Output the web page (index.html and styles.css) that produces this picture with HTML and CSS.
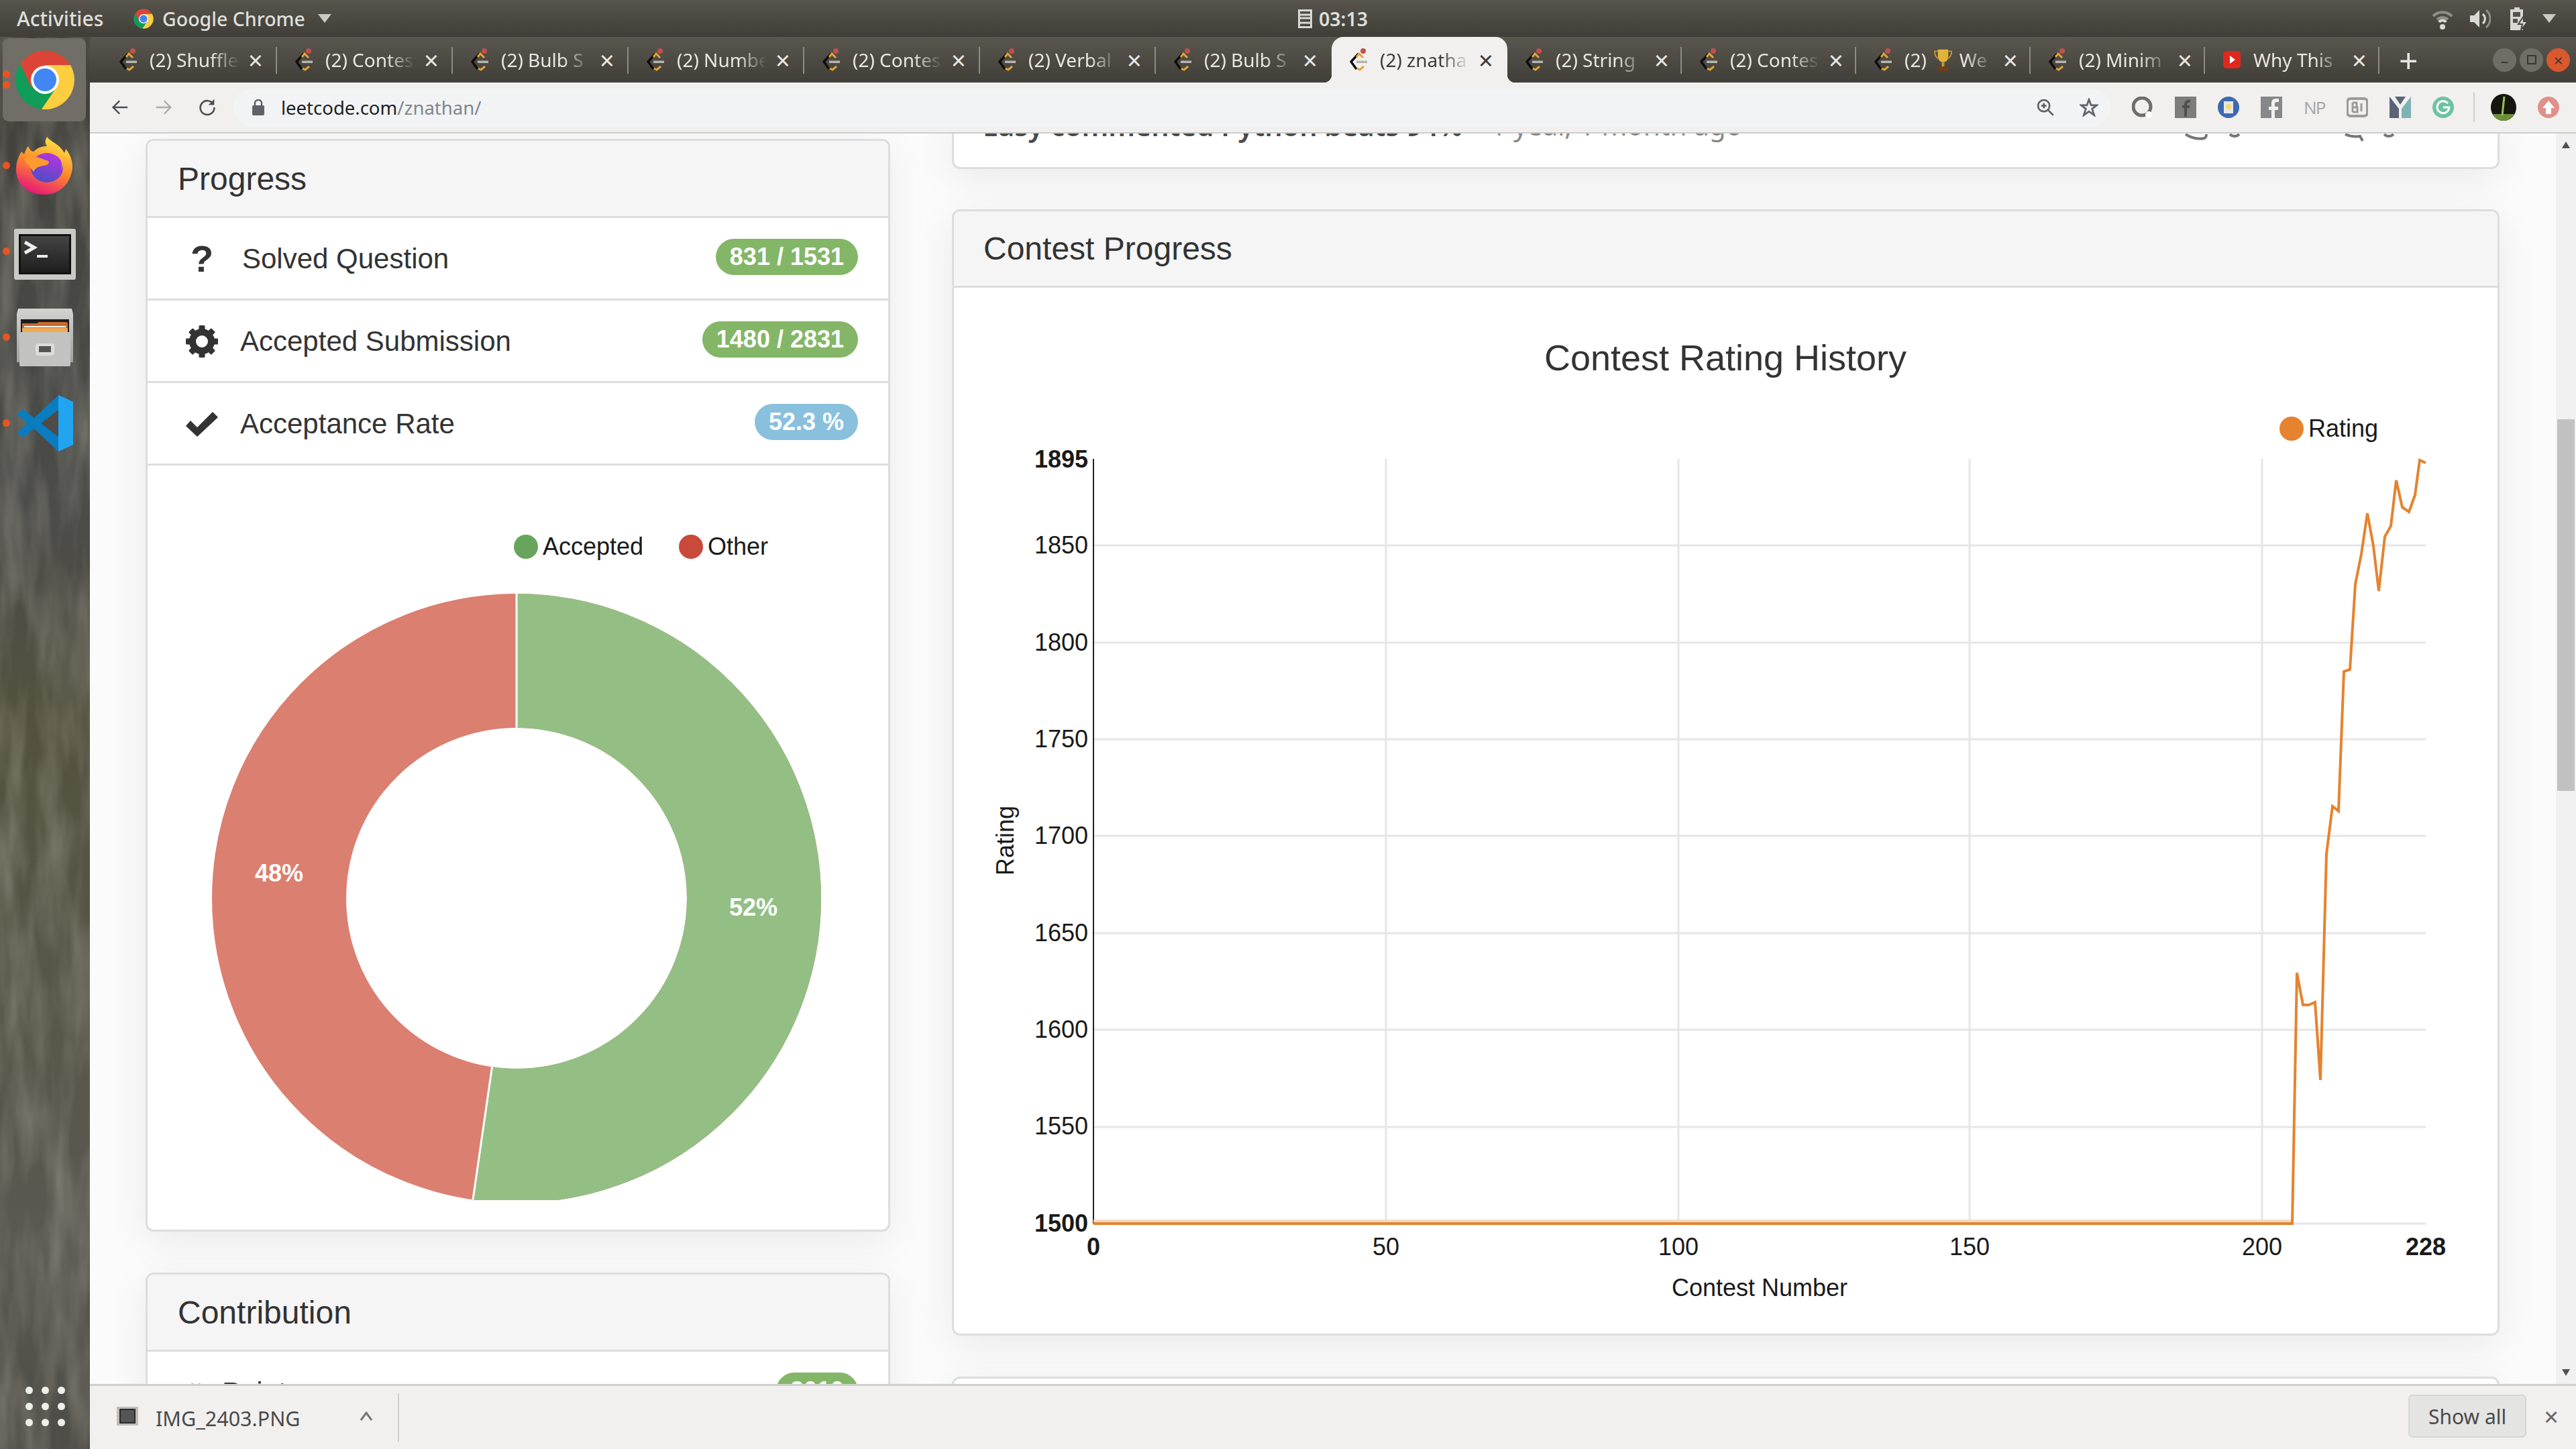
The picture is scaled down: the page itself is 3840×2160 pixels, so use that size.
FILE: index.html
```html
<!DOCTYPE html>
<html lang="en">
<head>
    <meta charset="UTF-8">
    <title>znathan - LeetCode Profile</title>
    <link rel="stylesheet" href="styles.css">
</head>
<body>
    <!-- shared icons -->
    <svg class="defs" width="0" height="0">
        <symbol id="chrome" viewBox="0 0 48 48">
            <circle cx="24" cy="24" r="22" fill="#0f9d58"/>
            <path d="M24 13H43A22 22 0 0 1 21.5 45.9L33 29Z" fill="#ffcd40"/>
            <path d="M5.6 12A22 22 0 0 1 43 13H24L14 30Z" fill="#db4437"/>
            <circle cx="24" cy="24" r="10.5" fill="#fff"/>
            <circle cx="24" cy="24" r="8.5" fill="#4285f4"/>
        </symbol>
        <symbol id="lc" viewBox="0 0 26 34">
            <path d="M13 8L2 20L10 31" fill="none" stroke="#0d0d0d" stroke-width="3.4" stroke-linejoin="round"/>
            <path d="M10 13L14 8L20 14M11 30L15 32L21 27" fill="none" stroke="#e5a235" stroke-width="3"/>
            <rect x="10" y="18.5" width="16" height="3.5" fill="#b5b5b0"/>
            <circle cx="20" cy="4" r="4" fill="#c0504d"/>
        </symbol>
        <filter id="wall" x="0" y="0" width="100%" height="100%">
            <feTurbulence type="fractalNoise" baseFrequency="0.03 0.006" numOctaves="3" seed="7"/>
            <feColorMatrix values="0 0 0 0 0.38  0 0 0 0 0.37  0 0 0 0 0.31  0.9 0 0 0 -0.32"/>
        </filter>
    </svg>

    <header class="topbar">
        <span class="activities">Activities</span>
        <svg class="top-chrome"><use href="#chrome"/></svg>
        <span class="app-name">Google Chrome</span>
        <span class="caret"></span>
        <span class="clock">
            <svg width="21" height="28" viewBox="0 0 21 28"><path d="M1.5 1.5h18v25h-18zM1.5 13h18M1.5 8h18M1.5 20h18" fill="none" stroke="#d8d8d4" stroke-width="3"/></svg>
            03:13
        </span>
        <span class="tray">
            <svg width="34" height="34" viewBox="0 0 34 34"><path d="M3 13A20 20 0 0 1 31 13M9 18A12 12 0 0 1 25 18" fill="none" stroke="#8f8e88" stroke-width="4"/><path d="M12 22A6 6 0 0 1 22 22" fill="none" stroke="#d8d8d4" stroke-width="4"/><circle cx="17" cy="29" r="4" fill="#d8d8d4"/></svg>
            <svg width="32" height="32" viewBox="0 0 32 32"><path d="M1 11h6L15 3v26L7 21H1z" fill="#d8d8d4"/><path d="M20 9a9 9 0 0 1 0 14" fill="none" stroke="#d8d8d4" stroke-width="3"/><path d="M25 3a17 17 0 0 1 0 26" fill="none" stroke="#8f8e88" stroke-width="3"/></svg>
            <svg class="battery" width="30" height="36" viewBox="0 0 30 36"><path d="M8 1h8v3h5v31H2V4h6z" fill="#d8d8d4"/><path d="M6 8h11v7H6zM6 18h7v6H6z" fill="#55524a"/><path d="M22 14l-8 12h6l-2 9 10-13h-6z" fill="#d8d8d4" stroke="#47453f" stroke-width="2"/></svg>
            <span class="caret"></span>
        </span>
    </header>

    <div class="desktop">
        <nav class="dock">
            <svg class="dock-wall" width="134" height="2105"><rect width="134" height="2105" filter="url(#wall)"/></svg>
            <div class="dock-item dock-active">
                <i class="run-dot run-dot-a"></i><i class="run-dot run-dot-b"></i>
                <svg width="96" height="96"><use href="#chrome"/></svg>
            </div>
            <div class="dock-item">
                <i class="run-dot"></i>
                <svg width="86" height="86" viewBox="0 0 86 86">
                    <defs>
                        <linearGradient id="fox" x1="0.7" y1="0" x2="0.3" y2="1"><stop offset="0" stop-color="#ffe847"/><stop offset="0.5" stop-color="#ff8a2b"/><stop offset="1" stop-color="#e5127c"/></linearGradient>
                        <linearGradient id="fox-c" x1="0.7" y1="0" x2="0.3" y2="1"><stop offset="0" stop-color="#b833e1"/><stop offset="1" stop-color="#4a4fc4"/></linearGradient>
                    </defs>
                    <path d="M46 0C52 8 64 10 72 24C74 20 74 18 74 18C84 30 86 44 82 56C76 76 60 86 42 86C18 86 0 72 0 48C0 38 4 28 8 22C10 24 12 26 12 26C14 20 16 16 18 14C20 18 22 22 26 22C32 16 38 14 46 14C42 8 44 4 46 0Z" fill="url(#fox)"/>
                    <ellipse cx="46" cy="46" rx="24" ry="22" fill="url(#fox-c)"/>
                    <path d="M12 34C22 26 34 30 42 34C48 36 52 36 46 42C36 44 30 44 26 52C22 46 16 40 12 34Z" fill="#ff9a2e"/>
                    <path d="M54 26C64 28 70 34 68 50C72 40 68 26 54 26Z" fill="#ffb53a"/>
                </svg>
            </div>
            <div class="dock-item dock-term">
                <i class="run-dot"></i>
                <svg width="92" height="76" viewBox="0 0 92 76">
                    <defs><linearGradient id="term" x1="0" y1="0" x2="0" y2="1"><stop offset="0" stop-color="#444"/><stop offset="1" stop-color="#1e1e1e"/></linearGradient></defs>
                    <rect width="92" height="76" rx="3" fill="#c9c9c6"/>
                    <rect x="7" y="8" width="78" height="60" fill="#111"/>
                    <rect x="10" y="11" width="72" height="54" fill="url(#term)"/>
                    <path d="M16 20L30 28L16 36" fill="none" stroke="#eee" stroke-width="5"/>
                    <rect x="34" y="39" width="16" height="4" fill="#eee"/>
                </svg>
            </div>
            <div class="dock-item">
                <i class="run-dot"></i>
                <svg width="84" height="86" viewBox="0 0 84 86">
                    <defs><linearGradient id="lid" x1="0" y1="0" x2="0" y2="1"><stop offset="0" stop-color="#d2d2d0"/><stop offset="1" stop-color="#a0a09e"/></linearGradient></defs>
                    <path d="M2 0H82L84 8V80H0V8Z" fill="url(#lid)"/>
                    <rect x="6" y="16" width="72" height="24" fill="#1c1c1c"/>
                    <path d="M8 22H30L33 20H74L76 22V40H8Z" fill="#c96a2e"/>
                    <rect x="8" y="29" width="68" height="8" fill="#eeaa55"/>
                    <rect x="11" y="26" width="62" height="2" fill="#fff"/>
                    <rect x="4" y="35" width="76" height="51" rx="2" fill="#c2c2c0"/>
                    <rect x="28" y="52" width="28" height="18" rx="4" fill="#dcdcda"/>
                    <rect x="33" y="56" width="18" height="9" fill="#555"/>
                </svg>
            </div>
            <div class="dock-item">
                <i class="run-dot"></i>
                <svg width="84" height="84" viewBox="0 0 84 84">
                    <path d="M62 0L84 10V74L62 84L26 50L9 63L0 56L16 42L0 28L9 21L26 34Z" fill="#0a7cc0"/>
                    <path d="M62 0L84 10V74L62 84Z" fill="#21a5f0"/>
                    <path d="M62 22L36 42L62 62Z" fill="#4d4c48"/>
                </svg>
            </div>
            <div class="apps-grid">
                <i></i><i></i><i></i><i></i><i></i><i></i><i></i><i></i><i></i>
            </div>
        </nav>

        <div class="browser">
            <div class="tabstrip">
                <div class="tab"><svg class="favicon"><use href="#lc"/></svg><span class="tab-title">(2) Shuffle</span><span class="tab-close">×</span></div>
                <div class="tab"><svg class="favicon"><use href="#lc"/></svg><span class="tab-title">(2) Contes</span><span class="tab-close">×</span></div>
                <div class="tab"><svg class="favicon"><use href="#lc"/></svg><span class="tab-title">(2) Bulb S</span><span class="tab-close">×</span></div>
                <div class="tab"><svg class="favicon"><use href="#lc"/></svg><span class="tab-title">(2) Numbe</span><span class="tab-close">×</span></div>
                <div class="tab"><svg class="favicon"><use href="#lc"/></svg><span class="tab-title">(2) Contes</span><span class="tab-close">×</span></div>
                <div class="tab"><svg class="favicon"><use href="#lc"/></svg><span class="tab-title">(2) Verbal</span><span class="tab-close">×</span></div>
                <div class="tab tab-before-active"><svg class="favicon"><use href="#lc"/></svg><span class="tab-title">(2) Bulb S</span><span class="tab-close">×</span></div>
                <div class="tab tab-active"><svg class="favicon"><use href="#lc"/></svg><span class="tab-title">(2) znatha</span><span class="tab-close">×</span></div>
                <div class="tab"><svg class="favicon"><use href="#lc"/></svg><span class="tab-title">(2) String</span><span class="tab-close">×</span></div>
                <div class="tab"><svg class="favicon"><use href="#lc"/></svg><span class="tab-title">(2) Contes</span><span class="tab-close">×</span></div>
                <div class="tab">
                    <svg class="favicon"><use href="#lc"/></svg>
                    <span class="tab-title tab-title-short">(2)
                        <svg class="trophy" width="29" height="33" viewBox="0 0 30 40" preserveAspectRatio="none"><path d="M7 1H23V14C23 20 19 24 15 24C11 24 7 20 7 14Z" fill="#e2b33a"/><path d="M7 4H2C2 12 4 16 9 18M23 4H28C28 12 26 16 21 18" fill="none" stroke="#c9962a" stroke-width="2"/><rect x="13" y="24" width="4" height="8" fill="#c9962a"/><rect x="7" y="32" width="16" height="7" fill="#7a3b12"/></svg>
                        We</span>
                    <span class="tab-close">×</span>
                </div>
                <div class="tab"><svg class="favicon"><use href="#lc"/></svg><span class="tab-title">(2) Minim</span><span class="tab-close">×</span></div>
                <div class="tab">
                    <svg class="favicon" viewBox="0 0 26 34"><rect x="0" y="4" width="26" height="26" rx="5" fill="#e0281e"/><path d="M10 11L18 17L10 23Z" fill="#fff"/></svg>
                    <span class="tab-title">Why This</span>
                    <span class="tab-close">×</span>
                </div>
                <span class="new-tab">+</span>
                <div class="win-buttons">
                    <span class="win-btn">–</span>
                    <span class="win-btn"><i></i></span>
                    <span class="win-btn win-close">×</span>
                </div>
            </div>

            <div class="toolbar">
                <span class="tool">
                    <svg width="26" height="24" viewBox="0 0 32 30"><path d="M30 15H4M15 3L3 15L15 27" fill="none" stroke="#4b4f54" stroke-width="3"/></svg>
                </span>
                <span class="tool">
                    <svg width="26" height="24" viewBox="0 0 32 30"><path d="M2 15H28M17 3L29 15L17 27" fill="none" stroke="#abadb0" stroke-width="3"/></svg>
                </span>
                <span class="tool">
                    <svg width="26" height="26" viewBox="0 0 30 30"><path d="M25 9A12 12 0 1 0 27 15" fill="none" stroke="#4b4f54" stroke-width="3"/><path d="M27 1V11H17Z" fill="#4b4f54"/></svg>
                </span>
                <div class="omnibox">
                    <svg class="lock" width="18" height="24" viewBox="0 0 18 24"><path d="M4 10V6a5 5 0 0 1 10 0v4" fill="none" stroke="#5f6368" stroke-width="2.5"/><rect y="9" width="18" height="15" rx="2" fill="#5f6368"/></svg>
                    <span class="url">leetcode.com<span class="url-path">/znathan/</span></span>
                    <svg class="omni-zoom" width="28" height="28" viewBox="0 0 36 36"><circle cx="15" cy="15" r="11" fill="none" stroke="#5f6368" stroke-width="3.5"/><path d="M23 23L33 33M10 15H20M15 10V20" stroke="#5f6368" stroke-width="3.5"/></svg>
                    <svg class="omni-star" width="28" height="28" viewBox="0 0 36 36"><path d="M18 3L22 14H33L24 21L28 33L18 26L8 33L12 21L3 14H14Z" fill="none" stroke="#5f6368" stroke-width="3.5"/></svg>
                </div>
                <div class="extensions">
                    <svg width="32" height="32" viewBox="0 0 32 32"><circle cx="15" cy="15" r="13" fill="none" stroke="#6e6e6e" stroke-width="5"/><circle cx="25" cy="27" r="5" fill="#fff"/></svg>
                    <svg width="32" height="32" viewBox="0 0 32 32"><rect width="32" height="32" fill="#7d7d7a"/><path d="M16 30V12C16 8 19 6 23 7M11 15H22" fill="none" stroke="#4f4f4d" stroke-width="4"/></svg>
                    <svg width="32" height="32" viewBox="0 0 32 32"><circle cx="16" cy="16" r="16" fill="#3e69b1"/><rect x="9" y="7" width="14" height="18" fill="#e8e8e8"/><circle cx="16" cy="15" r="4" fill="#f1dc6b"/></svg>
                    <svg width="32" height="32" viewBox="0 0 32 32"><rect width="32" height="32" fill="#85878a"/><path d="M21 32V20H26V15H21V11C21 9 22 8 24 8H27V3H22C18 3 16 6 16 10V15H12V20H16V32Z" fill="#f1f0ee"/></svg>
                    <span class="ext-np">NP</span>
                    <svg width="32" height="32" viewBox="0 0 32 32"><rect x="1" y="3" width="30" height="26" rx="5" fill="none" stroke="#9b9b9b" stroke-width="4"/><path d="M9 9V23M9 9H15V16H9M9 16H16V23H9M22 10V22" fill="none" stroke="#9b9b9b" stroke-width="3"/></svg>
                    <svg width="32" height="32" viewBox="0 0 32 32"><path d="M0 0L14 18V32H0Z" fill="#5b6477"/><path d="M32 0L18 18V32H32Z" fill="#7fb2b5"/><path d="M8 0H24L16 12Z" fill="#5b6477"/></svg>
                    <svg width="32" height="32" viewBox="0 0 32 32"><circle cx="16" cy="16" r="16" fill="#6cc2a2"/><path d="M23 10A9 9 0 1 0 25 16H16" fill="none" stroke="#fff" stroke-width="3"/></svg>
                    <i class="ext-sep"></i>
                    <svg class="ext-avatar" width="38" height="40" viewBox="0 0 38 40">
                        <defs><clipPath id="avatar"><ellipse cx="19" cy="20" rx="19" ry="20"/></clipPath></defs>
                        <g clip-path="url(#avatar)"><rect width="38" height="40" fill="#14160f"/><rect y="30" width="38" height="10" fill="#6d8f39"/><path d="M20 4L17 32" stroke="#9dc24a" stroke-width="3"/></g>
                    </svg>
                    <svg width="32" height="32" viewBox="0 0 32 32"><circle cx="16" cy="16" r="16" fill="#e0908a"/><path d="M16 6L25 17H20V26H12V17H7Z" fill="#fff"/></svg>
                </div>
            </div>

            <div class="page">
                <div class="col-left">
                    <section class="panel panel-progress">
                        <div class="panel-heading">Progress</div>
                        <ul class="stats">
                            <li class="stat">
                                <span class="stat-icon stat-q">?</span>
                                <span class="stat-name">Solved Question</span>
                                <span class="badge">831 / 1531</span>
                            </li>
                            <li class="stat">
                                <span class="stat-icon">
                                    <svg width="48" height="48" viewBox="0 0 48 48">
                                        <circle cx="24" cy="24" r="14" fill="none" stroke="#333" stroke-width="10"/>
                                        <g fill="#333">
                                            <rect x="19.5" width="9" height="10" rx="1.5"/>
                                            <rect x="19.5" width="9" height="10" rx="1.5" transform="rotate(45 24 24)"/>
                                            <rect x="19.5" width="9" height="10" rx="1.5" transform="rotate(90 24 24)"/>
                                            <rect x="19.5" width="9" height="10" rx="1.5" transform="rotate(135 24 24)"/>
                                            <rect x="19.5" width="9" height="10" rx="1.5" transform="rotate(180 24 24)"/>
                                            <rect x="19.5" width="9" height="10" rx="1.5" transform="rotate(225 24 24)"/>
                                            <rect x="19.5" width="9" height="10" rx="1.5" transform="rotate(270 24 24)"/>
                                            <rect x="19.5" width="9" height="10" rx="1.5" transform="rotate(315 24 24)"/>
                                        </g>
                                    </svg>
                                </span>
                                <span class="stat-name">Accepted Submission</span>
                                <span class="badge">1480 / 2831</span>
                            </li>
                            <li class="stat">
                                <span class="stat-icon">
                                    <svg width="48" height="37" viewBox="0 0 48 37"><path d="M0 21L7 13L17 23L40 0L48 8L17 37Z" fill="#333"/></svg>
                                </span>
                                <span class="stat-name">Acceptance Rate</span>
                                <span class="badge badge-info">52.3 %</span>
                            </li>
                        </ul>
                        <!-- page coordinates in the viewBox -->
                        <svg class="chart chart-donut" width="1102" height="1138" viewBox="221 693 1102 1138">
                            <defs><clipPath id="donut-clip"><rect x="221" y="693" width="1102" height="1095"/></clipPath></defs>
                            <circle cx="784" cy="814" r="18" fill="#67a55c"/>
                            <text class="chart-text" x="809" y="826">Accepted</text>
                            <circle cx="1030" cy="814" r="18" fill="#c9493b"/>
                            <text class="chart-text" x="1055" y="826">Other</text>
                            <g clip-path="url(#donut-clip)">
                                <circle cx="770" cy="1338" r="354" fill="none" stroke="#db7f70" stroke-width="200"/>
                                <circle cx="770" cy="1338" r="354" fill="none" stroke="#93bf85" stroke-width="200" pathLength="100" stroke-dasharray="52.3 100" transform="rotate(-90 770 1338)"/>
                                <path d="M770 884V1084M734 1586L705 1787" stroke="#fff" stroke-width="3"/>
                            </g>
                            <text class="donut-label" x="1123" y="1364">52%</text>
                            <text class="donut-label" x="416" y="1313">48%</text>
                        </svg>
                    </section>

                    <section class="panel">
                        <div class="panel-heading">Contribution</div>
                        <ul class="stats">
                            <li class="stat">
                                <span class="stat-icon stat-icon-small">
                                    <svg width="30" height="48" viewBox="0 0 40 48"><circle cx="13" cy="12" r="6" fill="#333"/><circle cx="27" cy="12" r="6" fill="#333"/><rect x="5" y="20" width="30" height="20" rx="4" fill="#333"/></svg>
                                </span>
                                <span class="stat-name">Points</span>
                                <span class="badge">2010</span>
                            </li>
                        </ul>
                    </section>
                </div>

                <div class="col-right">
                    <section class="panel panel-post">
                        <div class="post">
                            <span class="post-title">Easy commented Python beats 94%</span>
                            <span class="post-time">1 year, 1 month ago</span>
                            <svg class="post-icons" width="320" height="20" viewBox="0 0 320 20">
                                <path d="M2 2C10 8 22 10 30 8C33 7 33 4 33 2" fill="none" stroke="#777" stroke-width="4"/>
                                <path d="M68 2C72 6 78 6 82 2" fill="none" stroke="#777" stroke-width="4"/>
                                <path d="M240 2C248 6 256 6 262 5L266 12" fill="none" stroke="#777" stroke-width="4"/>
                                <path d="M298 2C302 6 308 6 312 2" fill="none" stroke="#777" stroke-width="4"/>
                            </svg>
                        </div>
                    </section>

                    <section class="panel panel-contest">
                        <div class="panel-heading">Contest Progress</div>
                        <!-- page coordinates in the viewBox -->
                        <svg class="chart" width="2300" height="1559" viewBox="1422 428 2300 1559">
                            <text class="chart-title" x="2572" y="551">Contest Rating History</text>
                            <circle cx="3416" cy="638" r="18" fill="#e5832f"/>
                            <text class="chart-text" x="3441" y="650">Rating</text>

                            <g class="grid">
                                <path d="M1630 812H3616M1630 957H3616M1630 1101H3616M1630 1245H3616M1630 1390H3616M1630 1534H3616M1630 1679H3616M1630 1823H3616"/>
                                <path d="M2066 683V1823M2502 683V1823M2936 683V1823M3372 683V1823"/>
                            </g>
                            <path d="M1630 683V1823" stroke="#222" stroke-width="2"/>

                            <g class="tick-y">
                                <text class="tick-end" x="1622" y="696">1895</text>
                                <text x="1622" y="824">1850</text>
                                <text x="1622" y="969">1800</text>
                                <text x="1622" y="1113">1750</text>
                                <text x="1622" y="1257">1700</text>
                                <text x="1622" y="1402">1650</text>
                                <text x="1622" y="1546">1600</text>
                                <text x="1622" y="1690">1550</text>
                                <text class="tick-end" x="1622" y="1835">1500</text>
                            </g>
                            <g class="tick-x">
                                <text class="tick-end" x="1630" y="1870">0</text>
                                <text x="2066" y="1870">50</text>
                                <text x="2502" y="1870">100</text>
                                <text x="2936" y="1870">150</text>
                                <text x="3372" y="1870">200</text>
                                <text class="tick-end" x="3616" y="1870">228</text>
                            </g>
                            <text class="axis-title" x="2623" y="1931">Contest Number</text>
                            <text class="axis-title" transform="rotate(-90 1511 1252)" x="1511" y="1252">Rating</text>

                            <path d="M1630 1820H3417" stroke="#f6d9c0" stroke-width="6"/>
                            <polyline class="line" points="1630,1823 3417,1823 3424,1449 3433,1497 3442,1497 3451,1493 3459,1609 3468,1272 3477,1201 3486,1208 3494,1000 3503,997 3511,870 3520,825 3529,764 3538,813 3546,880 3555,799 3564,783 3572,715 3581,755 3591,762 3600,737 3607,685 3616,689"/>
                        </svg>
                    </section>

                    <section class="panel panel-next"></section>
                </div>

                <div class="scrollbar">
                    <span class="scroll-up"></span>
                    <span class="scroll-thumb"></span>
                    <span class="scroll-down"></span>
                </div>
            </div>

            <div class="downloads">
                <svg class="dl-thumb" width="32" height="28" viewBox="0 0 32 28"><rect width="32" height="28" fill="#bdbdbb"/><rect x="4" y="3" width="24" height="22" fill="#2b2b2b"/><rect x="6" y="5" width="20" height="18" fill="#555"/></svg>
                <span class="dl-name">IMG_2403.PNG</span>
                <svg class="dl-caret" width="20" height="14" viewBox="0 0 20 14"><path d="M2 13L10 2L18 13" fill="none" stroke="#777" stroke-width="3"/></svg>
                <i class="dl-sep"></i>
                <span class="show-all">Show all</span>
                <span class="dl-close">×</span>
            </div>
        </div>
    </div>
</body>
</html>
```
FILE: styles.css
```css
* {
    box-sizing: border-box;
}
html, body {
    margin: 0;
    width: 3840px;
    height: 2160px;
    overflow: hidden;
}
body {
    font-family: "Noto Sans", sans-serif;
    background: #45433d;
}
ul {
    list-style: none;
    margin: 0;
    padding: 0;
}
.defs {
    position: absolute;
}

/* top bar */
.topbar {
    height: 55px;
    display: flex;
    align-items: center;
    padding-left: 25px;
    background: linear-gradient(#57544c, #403e38);
    color: #dedfda;
    font-size: 28.5px;
    font-weight: 500;
}
.activities {
    width: 173px;
    font-size: 30px;
}
.top-chrome {
    width: 32px;
    height: 32px;
    margin-right: 12px;
}
.app-name {
    width: 232px;
}
.caret {
    width: 0;
    height: 0;
    border-left: 10px solid transparent;
    border-right: 10px solid transparent;
    border-top: 13px solid #c9c9c5;
}
.clock {
    display: flex;
    align-items: center;
    gap: 10px;
    margin-left: 1441px;
    font-weight: 600;
}
.tray {
    display: flex;
    align-items: center;
    gap: 23px;
    margin-left: auto;
    padding-right: 30px;
}
.battery {
    margin: 0 -3px 0 4px;
}

/* dock */
.desktop {
    height: 2105px;
    display: flex;
}
.dock {
    position: relative;
    width: 134px;
    flex-shrink: 0;
    display: flex;
    flex-direction: column;
    background: linear-gradient(#403e38 0, #474744 18%, #4c4c49 35%, #54513f 48%, #585749 70%, #5a5952 85%, #4e4c46 100%);
}
.dock-wall {
    position: absolute;
    left: 0;
    top: 0;
}
.dock-item {
    position: relative;
    height: 128px;
    display: flex;
    align-items: center;
    justify-content: center;
}
.dock-active::before {
    content: "";
    position: absolute;
    left: 4px;
    right: 6px;
    top: 2px;
    bottom: 2px;
    border-radius: 9px;
    background: #716e67;
}
.dock-item svg {
    position: relative;
}
.dock-term svg {
    margin-top: 8px;
}
.run-dot {
    position: absolute;
    left: 4px;
    top: 58px;
    width: 11px;
    height: 11px;
    border-radius: 50%;
    background: #e95420;
    z-index: 1;
}
.run-dot-a {
    top: 50px;
}
.run-dot-b {
    top: 66px;
}
.apps-grid {
    position: relative;
    margin-top: auto;
    padding-bottom: 34px;
    align-self: center;
    display: grid;
    grid-template-columns: repeat(3, 11px);
    gap: 13px;
}
.apps-grid i {
    height: 11px;
    border-radius: 50%;
    background: #eeeeea;
}

/* browser */
.browser {
    flex: 1;
    min-width: 0;
    display: flex;
    flex-direction: column;
}
.tabstrip {
    height: 68px;
    display: flex;
    align-items: stretch;
    padding-left: 17px;
    background: linear-gradient(#5a574f, #403e38);
    color: #e8e6e2;
    font-size: 28px;
}
.tab {
    position: relative;
    width: 262px;
    flex-shrink: 0;
    display: flex;
    align-items: center;
    padding-left: 27px;
}
.tab-active ~ .tab {
    width: 260px;
}
.tab::after {
    content: "";
    position: absolute;
    right: 0;
    top: 15px;
    height: 40px;
    width: 2px;
    background: #8d8b84;
}
.tab-before-active::after {
    display: none;
}
.tab-active {
    background: #f1f0ee;
    color: #3c3c3c;
    border-radius: 18px 18px 0 0;
}
.tab-active::before,
.tab-active::after {
    content: "";
    position: absolute;
    top: auto;
    bottom: 0;
    width: 12px;
    height: 12px;
}
.tab-active::before {
    left: -12px;
    background: radial-gradient(circle at 0 0, transparent 12px, #f1f0ee 12.5px);
}
.tab-active::after {
    right: -12px;
    background: radial-gradient(circle at 100% 0, transparent 12px, #f1f0ee 12.5px);
}
.favicon {
    width: 26px;
    height: 34px;
    flex-shrink: 0;
}
.tab-title {
    width: 134px;
    margin-left: 19px;
    white-space: nowrap;
    overflow: hidden;
    -webkit-mask-image: linear-gradient(to right, #000 68%, transparent);
    mask-image: linear-gradient(to right, #000 68%, transparent);
}
.tab-title-short {
    display: flex;
    align-items: center;
    gap: 10px;
}
.tab-close {
    margin-left: 13px;
    font-size: 38px;
    line-height: 1;
}
.new-tab {
    align-self: center;
    margin-left: 29px;
    font-size: 50px;
    line-height: 1;
}
.win-buttons {
    display: flex;
    align-items: center;
    gap: 5px;
    margin-left: auto;
    padding-right: 9px;
}
.win-btn {
    width: 35px;
    height: 35px;
    display: flex;
    align-items: center;
    justify-content: center;
    border-radius: 50%;
    background: #6f6d66;
    color: #38362f;
    font-size: 24px;
}
.win-btn i {
    width: 14px;
    height: 14px;
    border: 2px solid #38362f;
}
.win-close {
    background: #d9582d;
}

/* toolbar */
.toolbar {
    height: 76px;
    display: flex;
    align-items: center;
    padding-left: 12px;
    background: #f1f0ee;
    border-bottom: 2px solid #cdcdcd;
}
.tool {
    width: 65px;
    display: flex;
    justify-content: center;
}
.omnibox {
    width: 2798px;
    height: 57px;
    margin-left: 7px;
    display: flex;
    align-items: center;
    padding: 0 18px 0 28px;
    border-radius: 29px;
    background: #f1f3f5;
}
.url {
    margin-left: 25px;
    font-size: 27.5px;
    color: #202124;
}
.url-path {
    color: #80868b;
}
.omni-zoom {
    margin-left: auto;
}
.omni-star {
    margin-left: 37px;
}
.extensions {
    display: flex;
    align-items: center;
    gap: 32px;
    margin-left: 32px;
}
.ext-np {
    width: 32px;
    font-size: 26px;
    letter-spacing: -2px;
    color: #a9a9a9;
}
.ext-sep {
    width: 2px;
    height: 44px;
    background: #cfcfcd;
    margin: 0 -8px 0 -3px;
}

/* page */
.page {
    flex: 1;
    min-height: 0;
    display: flex;
    overflow: hidden;
    background: #fbfbfb;
    padding-left: 83px;
}
.col-left {
    width: 1110px;
    flex-shrink: 0;
    padding-top: 8px;
}
.col-right {
    width: 2307px;
    flex-shrink: 0;
    margin-left: 92px;
}
.panel {
    background: #fff;
    border: 3px solid #ddd;
    border-radius: 12px;
    box-shadow: 0 14px 60px rgba(0, 0, 0, .07);
    overflow: hidden;
}
.panel-heading {
    height: 114px;
    display: flex;
    align-items: center;
    padding-left: 44px;
    background: #f5f5f5;
    border-bottom: 3px solid #ddd;
    font-family: "Liberation Sans", Arial, sans-serif;
    font-size: 48px;
    color: #333;
}
.col-left .panel-heading {
    height: 115px;
    padding-left: 45px;
}
.panel-progress {
    height: 1629px;
    margin-bottom: 61px;
}
.stat {
    height: 123px;
    display: flex;
    align-items: center;
    padding: 2px 45px 0 57px;
    border-bottom: 3px solid #ddd;
    font-size: 42px;
    color: #333;
}
.stat-icon {
    width: 48px;
    margin-right: 33px;
    display: flex;
    justify-content: center;
}
.stat-icon-small {
    width: 30px;
    margin-right: 24px;
}
.stat-q {
    margin-right: 36px;
    font-family: "Liberation Sans", sans-serif;
    font-size: 56px;
    font-weight: 700;
    line-height: 1;
}
.stat-name {
    font-family: "Liberation Sans", Arial, sans-serif;
}
.badge {
    height: 54px;
    margin: -6px 0 0 auto;
    padding: 0 21px;
    border-radius: 27px;
    background: #84b667;
    color: #fff;
    font: 700 36px/54px "Liberation Sans", Arial, sans-serif;
}
.badge-info {
    background: #89c0de;
}
.chart {
    display: block;
    font-family: "Liberation Sans", Arial, sans-serif;
}
.chart-donut {
    margin-left: 1px;
}
.chart-text {
    font-size: 36px;
    fill: #1a1a1a;
}
.donut-label {
    font-size: 36px;
    font-weight: 700;
    fill: #fff;
    text-anchor: middle;
}
.panel-post {
    height: 73px;
    margin-top: -20px;
    margin-bottom: 60px;
}
.post {
    height: 70px;
    display: flex;
    align-items: flex-start;
    padding: 0 0 0 43px;
    line-height: 50px;
}
.post-title {
    margin-top: -20px;
    font-size: 41.4px;
    font-weight: 600;
    color: #4a4a4a;
}
.post-time {
    margin: -20px 0 0 42px;
    font-size: 40.5px;
    color: #888;
}
.post-icons {
    margin: 16px 147px 0 auto;
}
.panel-contest {
    height: 1679px;
    margin-bottom: 61px;
}
.chart-title {
    font-size: 54px;
    fill: #333;
    text-anchor: middle;
}
.grid path {
    fill: none;
    stroke: #e6e6e6;
    stroke-width: 3;
}
.tick-y text,
.tick-x text {
    font-size: 36px;
    fill: #1a1a1a;
}
.tick-y text {
    text-anchor: end;
}
.tick-x text {
    text-anchor: middle;
}
.tick-y .tick-end,
.tick-x .tick-end {
    font-weight: 700;
}
.axis-title {
    font-size: 36px;
    fill: #1a1a1a;
    text-anchor: middle;
}
.line {
    fill: none;
    stroke: #e5832f;
    stroke-width: 4;
}
.panel-next {
    height: 60px;
}

/* scrollbar */
.scrollbar {
    position: relative;
    width: 30px;
    flex-shrink: 0;
    margin-left: auto;
    background: #f1f1f1;
}
.scroll-thumb {
    position: absolute;
    left: 2px;
    right: 2px;
    top: 426px;
    height: 554px;
    background: #c1c1c1;
}
.scroll-up,
.scroll-down {
    position: absolute;
    left: 9px;
    width: 0;
    height: 0;
    border-left: 6px solid transparent;
    border-right: 6px solid transparent;
}
.scroll-up {
    top: 12px;
    border-bottom: 10px solid #505050;
}
.scroll-down {
    bottom: 12px;
    border-top: 10px solid #505050;
}

/* download bar */
.downloads {
    height: 97px;
    display: flex;
    align-items: center;
    padding: 0 0 4px 40px;
    background: #f1f0ee;
    border-top: 3px solid #cfcfcf;
    color: #4a4a4a;
    font-size: 30px;
}
.dl-name {
    width: 216px;
    margin: 6px 0 0 26px;
    font-size: 30.5px;
    white-space: nowrap;
}
.dl-caret {
    margin: 0 0 0 88px;
}
.dl-sep {
    width: 2px;
    height: 72px;
    margin: 4px 0 0 37px;
    background: #cfcfcd;
}
.show-all {
    height: 64px;
    margin-left: auto;
    padding: 0 28px;
    display: flex;
    align-items: center;
    border: 2px solid #d6d6d4;
    border-radius: 6px;
    background: #e4e4e2;
    white-space: nowrap;
}
.dl-close {
    margin: 0 26px 0 26px;
    font-size: 38px;
    color: #666;
}
```
